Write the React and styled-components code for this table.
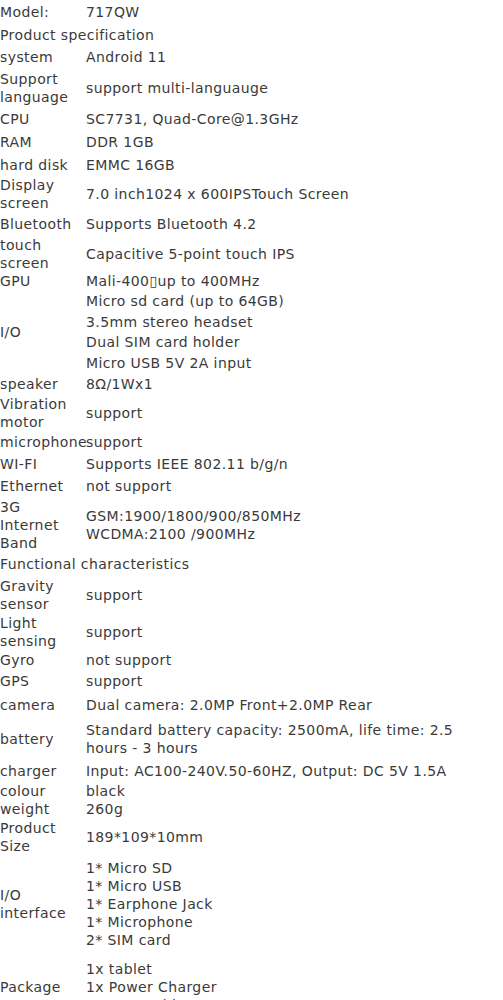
import React from "react";
import styled, { createGlobalStyle } from "styled-components";

const GlobalStyle = createGlobalStyle`
  body {
    margin: 0;
    background: #ffffff;
  }
`;

const Sheet = styled.table`
  border-collapse: collapse;
  border-spacing: 0;
  width: 470px;
  table-layout: fixed;
  font-family: "DejaVu Sans", Verdana, sans-serif;
  font-size: 14px;
  line-height: 18px;
  letter-spacing: 0.4px;
  color: #3a3a3a;
`;

const Row = styled.tr`
  height: ${(p) => p.$h}px;
`;

const Label = styled.td`
  width: 86px;
  padding: 0;
  vertical-align: middle;
  white-space: ${(p) => (p.$nowrap ? "nowrap" : "normal")};
  overflow: visible;
`;

const Value = styled.td`
  padding: 0;
  vertical-align: middle;
`;

const Heading = styled.td`
  padding: 0;
  vertical-align: middle;
`;

const Line = styled.div``;

const rows = [
  { h: 23, label: ["Model:"], value: ["717QW"] },
  { h: 23, heading: "Product specification" },
  { h: 22, label: ["system"], value: ["Android 11"] },
  { h: 39, label: ["Support", "language"], value: ["support multi-languauge"] },
  { h: 23, label: ["CPU"], value: ["SC7731, Quad-Core@1.3GHz"] },
  { h: 24, label: ["RAM"], value: ["DDR 1GB"] },
  { h: 21, label: ["hard disk"], value: ["EMMC 16GB"] },
  { h: 38, label: ["Display", "screen"], value: ["7.0 inch1024 x 600IPSTouch Screen"] },
  { h: 22, label: ["Bluetooth"], value: ["Supports Bluetooth 4.2"] },
  { h: 37, label: ["touch", "screen"], value: ["Capacitive 5-point touch IPS"] },
  { h: 18, label: ["GPU"], value: ["Mali-400\u25afup to 400MHz"] },
  { h: 21, label: ["I/O"], span: 4, value: ["Micro sd card (up to 64GB)"] },
  { h: 21, value: ["3.5mm stereo headset"] },
  { h: 20, value: ["Dual SIM card holder"] },
  { h: 21, value: ["Micro USB 5V 2A input"] },
  { h: 21, label: ["speaker"], value: ["8\u03a9/1Wx1"] },
  { h: 38, label: ["Vibration", "motor"], value: ["support"] },
  { h: 20, label: ["microphone"], value: ["support"] },
  { h: 23, label: ["WI-FI"], value: ["Supports IEEE 802.11 b/g/n"] },
  { h: 21, label: ["Ethernet"], value: ["not support"] },
  { h: 57, label: ["3G", "Internet", "Band"], value: ["GSM:1900/1800/900/850MHz", "WCDMA:2100 /900MHz"] },
  { h: 22, heading: "Functional characteristics" },
  { h: 39, label: ["Gravity", "sensor"], value: ["support"] },
  { h: 36, label: ["Light", "sensing"], value: ["support"] },
  { h: 20, label: ["Gyro"], value: ["not support"] },
  { h: 22, label: ["GPS"], value: ["support"] },
  { h: 25, label: ["camera"], value: ["Dual camera: 2.0MP Front+2.0MP Rear"] },
  { h: 43, label: ["battery"], value: ["Standard battery capacity: 2500mA, life time: 2.5 hours - 3 hours"] },
  { h: 21, label: ["charger"], value: ["Input: AC100-240V.50-60HZ, Output: DC 5V 1.5A"] },
  { h: 19, label: ["colour"], value: ["black"] },
  { h: 18, label: ["weight"], value: ["260g"] },
  { h: 38, label: ["Product", "Size"], value: ["189*109*10mm"] },
  {
    h: 96,
    label: ["I/O", "interface"],
    value: ["1* Micro SD", "1* Micro USB", "1* Earphone Jack", "1* Microphone", "2* SIM card"],
  },
  { h: 70, label: ["Package"], value: ["1x tablet", "1x Power Charger", "1x USB Cable"] },
];

const App = () => (
  <>
    <GlobalStyle />
    <Sheet>
      <tbody>
        {rows.map((r, i) =>
          r.heading ? (
            <Row key={i} $h={r.h}>
              <Heading colSpan={2}>{r.heading}</Heading>
            </Row>
          ) : (
            <Row key={i} $h={r.h}>
              {r.label && (
                <Label rowSpan={r.span || 1} $nowrap>
                  {r.label.map((l, j) => (
                    <Line key={j}>{l}</Line>
                  ))}
                </Label>
              )}
              <Value>
                {r.value.map((v, j) => (
                  <Line key={j}>{v}</Line>
                ))}
              </Value>
            </Row>
          )
        )}
      </tbody>
    </Sheet>
  </>
);

export default App;
